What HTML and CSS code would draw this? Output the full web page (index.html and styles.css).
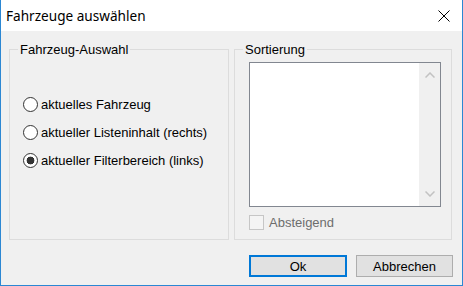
FILE: index.html
```html
<!DOCTYPE html>
<html lang="de">
<head>
    <meta charset="UTF-8">
    <meta name="viewport" content="width=device-width, initial-scale=1.0">
    <title>Fahrzeuge auswählen</title>
    <link rel="stylesheet" href="styles.css">
</head>
<body>
    <div class="window">
        <div class="titlebar">
            <span class="title">Fahrzeuge auswählen</span>
            <span class="close">
                <svg width="12" height="12" viewBox="0 0 12 12"><path d="M0.5 0.5 L11.5 11.5 M11.5 0.5 L0.5 11.5" stroke="#000" stroke-width="1" fill="none"/></svg>
            </span>
        </div>
        <div class="client">
            <div class="groups">
                <fieldset class="group group-left">
                    <legend>Fahrzeug-Auswahl</legend>
                    <label class="option"><input type="radio" name="auswahl"> aktuelles Fahrzeug</label>
                    <label class="option"><input type="radio" name="auswahl"> aktueller Listeninhalt (rechts)</label>
                    <label class="option"><input type="radio" name="auswahl" checked> aktueller Filterbereich (links)</label>
                </fieldset>
                <fieldset class="group group-right">
                    <legend>Sortierung</legend>
                    <div class="listbox">
                        <div class="list-items"></div>
                        <div class="scrollbar">
                            <span class="arrow"><svg width="10" height="6" viewBox="0 0 10 6"><polyline points="0.5,5.5 5,1 9.5,5.5" stroke="#c2c2c2" stroke-width="1.5" fill="none"/></svg></span>
                            <span class="arrow"><svg width="10" height="6" viewBox="0 0 10 6"><polyline points="0.5,0.5 5,5 9.5,0.5" stroke="#c2c2c2" stroke-width="1.5" fill="none"/></svg></span>
                        </div>
                    </div>
                    <label class="check"><input type="checkbox" disabled> Absteigend</label>
                </fieldset>
            </div>
            <div class="buttons">
                <button class="btn btn-default">Ok</button>
                <button class="btn">Abbrechen</button>
            </div>
        </div>
    </div>
</body>
</html>
```

FILE: styles.css
```css
body {
    margin: 0;
    font-family: "Liberation Sans", Arial, sans-serif;
    font-size: 13px;
    color: #000;
    background: #fff;
}
.window {
    width: 463px;
    height: 286px;
    box-sizing: border-box;
    border: 1px solid #2b87d3;
    border-top: none;
    display: flex;
    flex-direction: column;
    background: #f0f0f0;
}
.titlebar {
    height: 31px;
    flex: none;
    background: #fff;
    display: flex;
    align-items: center;
}
.title {
    flex: 1;
    padding-left: 5px;
    font-family: "Noto Sans", "Open Sans", sans-serif;
    font-size: 13.6px;
}
.close {
    width: 36px;
    display: flex;
    justify-content: center;
}
.close svg {
    display: block;
}
.client {
    flex: 1;
    display: flex;
    flex-direction: column;
    padding: 11px 9px 8px 8px;
}
.groups {
    display: flex;
    gap: 5px;
    height: 198px;
    margin-right: 1px;
}
.group {
    margin: 0;
    border: 1px solid #dcdcdc;
    box-sizing: border-box;
    min-width: 0;
}
.group legend {
    padding: 0 2px;
    line-height: 15px;
}
.group-left {
    width: 220px;
    padding: 33px 0 0 13px;
}
.group-left legend {
    margin-left: -5px;
}
.group-right {
    width: 218px;
    padding: 5px 0 0 14px;
}
.group-right legend {
    margin-left: -6px;
}
.option {
    display: flex;
    align-items: center;
    gap: 3px;
    height: 28px;
}
.option input {
    appearance: none;
    width: 15px;
    height: 15px;
    margin: 0;
    border: 1px solid #333;
    border-radius: 50%;
    background: #fff;
}
.option input:checked {
    background: radial-gradient(circle, #333 0 3.6px, #fff 4.2px);
}
.listbox {
    width: 192px;
    height: 145px;
    box-sizing: border-box;
    border: 1px solid #828790;
    display: flex;
}
.list-items {
    flex: 1;
    background: #fff;
}
.scrollbar {
    width: 21px;
    background: #f0f0f0;
    display: flex;
    flex-direction: column;
    justify-content: space-between;
}
.arrow {
    height: 24px;
    display: flex;
    align-items: center;
    justify-content: center;
}
.arrow svg {
    display: block;
}
.check {
    display: flex;
    align-items: center;
    gap: 5px;
    margin-top: 8px;
    color: #6d6d6d;
}
.check input {
    appearance: none;
    width: 15px;
    height: 15px;
    margin: 0;
    border: 1px solid #c6c6c6;
    background: #f4f4f4;
}
.buttons {
    display: flex;
    justify-content: flex-end;
    gap: 9px;
    height: 22px;
    margin-top: 15px;
}
.btn {
    width: 97px;
    height: 22px;
    padding: 0;
    border: 1px solid #adadad;
    background: #e1e1e1;
    font-family: "Liberation Sans", Arial, sans-serif;
    font-size: 13px;
    color: #000;
}
.btn-default {
    width: 98px;
    border: 2px solid #0078d7;
}
```
